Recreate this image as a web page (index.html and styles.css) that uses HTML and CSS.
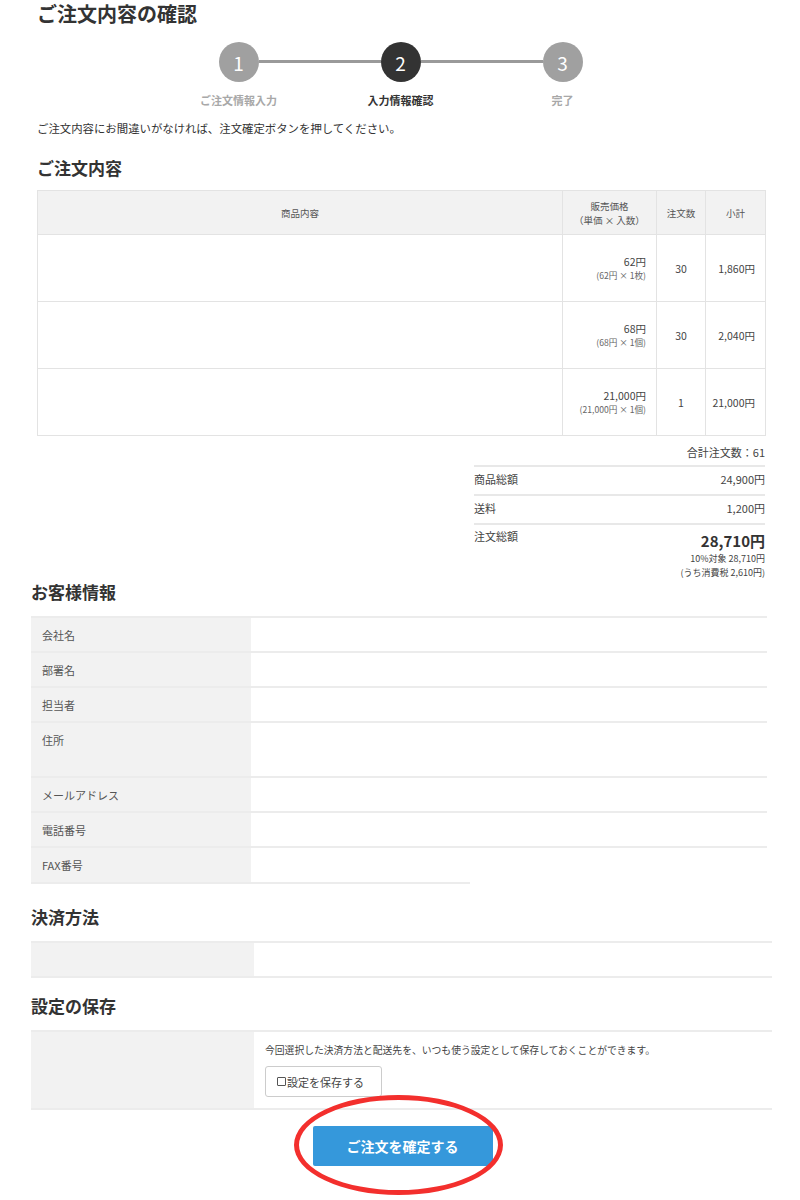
FILE: index.html
```html
<!DOCTYPE html>
<html lang="ja">
<head>
<meta charset="utf-8">
<title>ご注文内容の確認</title>
<link rel="stylesheet" href="styles.css">
</head>
<body>
<div class="page">
  <section class="top">
    <h1 class="title">ご注文内容の確認</h1>
    <div class="stepper">
      <div class="steps">
        <span class="circle">1</span><span class="bar"></span><span class="circle current">2</span><span class="bar"></span><span class="circle">3</span>
      </div>
      <div class="step-labels">
        <span class="step-label">ご注文情報入力</span>
        <span class="step-label current">入力情報確認</span>
        <span class="step-label">完了</span>
      </div>
    </div>
    <p class="intro">ご注文内容にお間違いがなければ、注文確定ボタンを押してください。</p>
    <h2 class="heading">ご注文内容</h2>
    <table class="order">
      <colgroup><col class="c-item"><col class="c-price"><col class="c-qty"><col class="c-sub"></colgroup>
      <thead>
        <tr><th>商品内容</th><th>販売価格<br>（単価 × 入数）</th><th>注文数</th><th>小計</th></tr>
      </thead>
      <tbody>
        <tr><td></td><td class="price">62円<span class="unit">(62円 × 1枚)</span></td><td class="qty">30</td><td class="sub">1,860円</td></tr>
        <tr><td></td><td class="price">68円<span class="unit">(68円 × 1個)</span></td><td class="qty">30</td><td class="sub">2,040円</td></tr>
        <tr><td></td><td class="price">21,000円<span class="unit">(21,000円 × 1個)</span></td><td class="qty">1</td><td class="sub">21,000円</td></tr>
      </tbody>
    </table>
    <p class="count">合計注文数：61</p>
    <div class="totals">
      <div class="trow"><span>商品総額</span><span>24,900円</span></div>
      <div class="trow"><span>送料</span><span>1,200円</span></div>
      <div class="trow grand"><span>注文総額</span><span class="gval"><strong>28,710円</strong><small>10%対象 28,710円</small><small>(うち消費税 2,610円)</small></span></div>
    </div>
  </section>

  <section class="bottom">
    <h2 class="heading">お客様情報</h2>
    <table class="info">
      <tr><th>会社名</th><td></td></tr>
      <tr><th>部署名</th><td></td></tr>
      <tr><th>担当者</th><td></td></tr>
      <tr class="tall"><th>住所</th><td></td></tr>
      <tr><th>メールアドレス</th><td></td></tr>
      <tr><th>電話番号</th><td></td></tr>
      <tr class="last"><th>FAX番号</th><td></td></tr>
    </table>
    <div class="info-end"></div>

    <h2 class="heading pay-head">決済方法</h2>
    <table class="info wide">
      <tr class="pay"><th></th><td></td></tr>
    </table>

    <h2 class="heading save-head">設定の保存</h2>
    <table class="info wide">
      <tr class="save"><th></th><td>
        <p class="note">今回選択した決済方法と配送先を、いつも使う設定として保存しておくことができます。</p>
        <label class="savebtn"><span class="box"></span>設定を保存する</label>
      </td></tr>
    </table>

    <div class="confirm-wrap">
      <div class="confirm">
        <button class="confirm-btn" type="button">ご注文を確定する</button>
        <span class="ring"></span>
      </div>
    </div>
  </section>
</div>
</body>
</html>
```

FILE: styles.css
```css
* { box-sizing: border-box; }
body {
  margin: 0;
  font-family: "Noto Sans CJK JP", "Noto Sans", sans-serif;
  color: #333;
  background: #fff;
}
.page { width: 800px; min-height: 1200px; }
.top { margin-left: 37px; width: 728px; }
.bottom { margin-left: 31px; width: 741px; }

.title {
  margin: 0;
  font-size: 20px;
  line-height: 27px;
  font-weight: 700;
  color: #333;
}

.stepper { margin-left: -37px; width: 800px; margin-top: 15px; }
.steps { display: flex; justify-content: center; align-items: center; padding-left: 1px; }
.circle {
  width: 40px; height: 40px; border-radius: 50%;
  background: #a0a0a0; color: #fff;
  display: flex; align-items: center; justify-content: center;
  font-size: 19px; line-height: 1;
}
.circle.current { background: #333; }
.bar { width: 122px; height: 3px; background: #9a9a9a; margin-top: -1px; }
.step-labels { display: flex; justify-content: center; margin-top: 10px; padding-left: 1px; }
.step-label { width: 162px; text-align: center; font-size: 11px; line-height: 16px; font-weight: 700; color: #a8a8a8; }
.step-label.current { color: #333; }

.intro { margin: 11px 0 0; font-size: 11.4px; line-height: 18px; color: #333; }

.heading {
  margin: 19px 0 10px;
  font-size: 17px;
  line-height: 24px;
  font-weight: 700;
  color: #333;
}

.order { width: 728px; border-collapse: collapse; table-layout: fixed; }
.c-item { width: 525px; } .c-price { width: 94px; } .c-qty { width: 49px; } .c-sub { width: 60px; }
.order th, .order td { border: 1px solid #e3e3e3; }
.order th {
  background: #f2f2f2; height: 44px; font-size: 9.5px; line-height: 14px;
  font-weight: 400; color: #555; text-align: center; padding: 0;
}
.order td { height: 67px; font-size: 10.5px; color: #444; padding: 0; }
.order .price { text-align: right; padding-right: 10px; line-height: 14px; }
.order .unit { display: block; font-size: 8.6px; line-height: 12px; color: #666; }
.order .qty { text-align: center; }
.order .sub { text-align: right; padding-right: 10px; }

.count { margin: 8px 0 5px; text-align: right; font-size: 11px; line-height: 16px; color: #444; }
.totals { width: 291px; margin-left: auto; }
.trow {
  display: flex; justify-content: space-between;
  border-top: 2px solid #e8e8e8;
  height: 29px; padding-top: 4px;
  font-size: 11px; line-height: 16px; color: #444;
}
.trow.grand { height: auto; padding-top: 3px; }
.gval { display: flex; flex-direction: column; align-items: flex-end; }
.gval strong { font-size: 15px; line-height: 22px; font-weight: 700; color: #333; margin-top: 2px; }
.gval small { font-size: 9px; line-height: 14px; color: #444; }

.bottom .heading { margin-bottom: 12px; }
.bottom .heading:first-child { margin-top: 0; }
.bottom .pay-head { margin-top: 21px; }
.bottom .save-head { margin-top: 16px; }
.info { width: 736px; border-collapse: collapse; table-layout: fixed; }
.info.wide { width: 741px; }
.info tr { border-top: 2px solid #ececec; }
.info th {
  width: 220px; background: #f2f2f2; text-align: left; vertical-align: top;
  font-size: 11px; line-height: 16px; font-weight: 400; color: #555;
  padding: 9px 11px 7px; height: 35px;
}
.info.wide th { width: 223px; }
.info td { padding: 0; }
.info tr.tall th { height: 55px; }
.info-end { width: 439px; border-top: 2px solid #ececec; }
.info.wide { border-bottom: 2px solid #ececec; }
.info tr.pay th { height: 35px; }
.info tr.save td { padding: 10px 11px 11px; vertical-align: top; }
.info tr.save th { height: 77px; }
.note { margin: 0; font-size: 9.8px; line-height: 16px; color: #444; }
.savebtn {
  display: inline-flex; align-items: center;
  margin-top: 8px; width: 117px; height: 31px;
  border: 1px solid #ccc; border-radius: 3px;
  padding-left: 11px;
  font-size: 11px; color: #444;
}
.box { width: 9px; height: 9px; border: 1px solid #555; border-radius: 1px; margin-right: 1px; }

.confirm-wrap { display: flex; justify-content: center; margin-top: 16px; padding-left: 2px; width: 741px; }
.confirm { position: relative; }
.confirm-btn {
  width: 180px; height: 40px; border: 0; border-radius: 2px;
  background: #3598db; color: #fff;
  font-family: "Noto Sans CJK JP", sans-serif; font-size: 14px; font-weight: 700;
}
.ring {
  position: absolute; left: -19px; top: -31px; width: 209px; height: 100px;
  border: 5px solid #f32f2d; border-radius: 50%;
  pointer-events: none;
}
```
